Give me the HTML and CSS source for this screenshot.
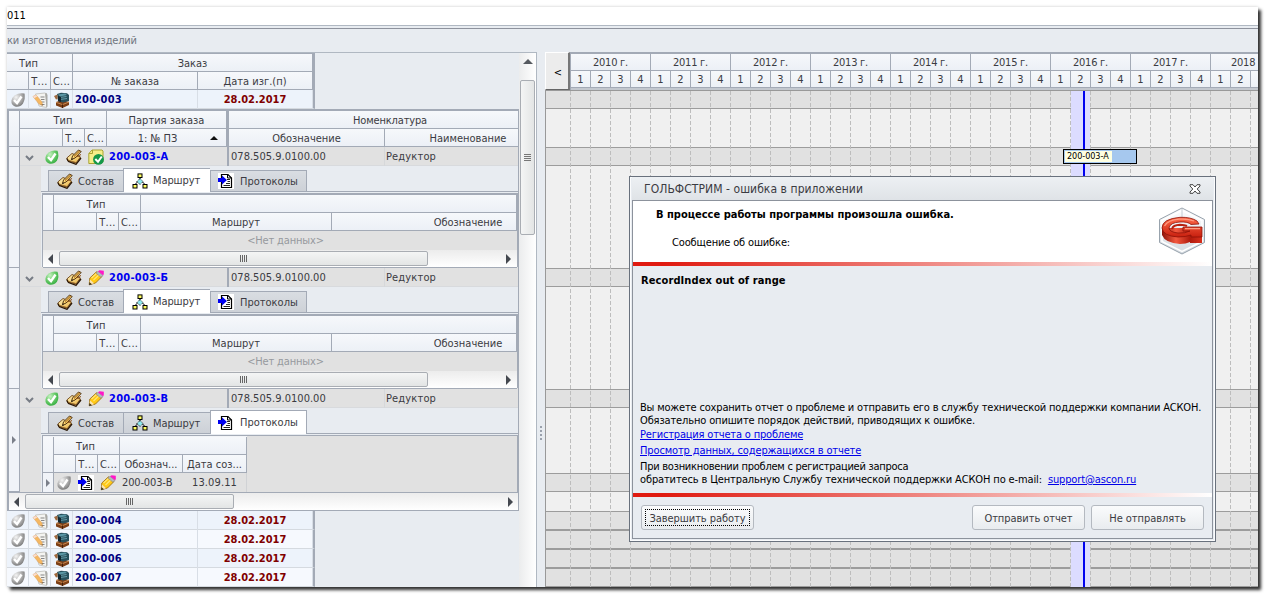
FILE: index.html
```
<!DOCTYPE html>
<html lang="ru">
<head>
<meta charset="utf-8">
<title>ГОЛЬФСТРИМ</title>
<link rel="stylesheet" href="styles.css">
</head>
<body>
<svg class="defs" width="0" height="0">
  <defs>
    <radialGradient id="gGrey" cx=".35" cy=".3" r=".8"><stop offset="0" stop-color="#f4f4f4"/><stop offset=".5" stop-color="#b4b4b4"/><stop offset="1" stop-color="#6c6c6c"/></radialGradient>
    <radialGradient id="gGreen" cx=".35" cy=".3" r=".8"><stop offset="0" stop-color="#c4f0c0"/><stop offset=".5" stop-color="#6ccc6c"/><stop offset="1" stop-color="#2ba83a"/></radialGradient>
    <linearGradient id="gGold" x1="0" y1="0" x2="1" y2="1"><stop offset="0" stop-color="#fff6c0"/><stop offset="1" stop-color="#eab040"/></linearGradient>
    <linearGradient id="gRed" x1="0" y1="0" x2="0" y2="1"><stop offset="0" stop-color="#ff6a4a"/><stop offset="1" stop-color="#c8200f"/></linearGradient>
    <linearGradient id="gSide" x1="0" y1="0" x2="1" y2="0"><stop offset="0" stop-color="#8e1208"/><stop offset=".35" stop-color="#f2583e"/><stop offset=".7" stop-color="#b01a0c"/><stop offset="1" stop-color="#d8301c"/></linearGradient>
    <linearGradient id="gHex" x1="0" y1="0" x2="0" y2="1"><stop offset="0" stop-color="#fdfdfe"/><stop offset="1" stop-color="#d3d9df"/></linearGradient>
  </defs>
  <symbol id="ok-grey" viewBox="0 0 16 16"><path d="M4.500 3.500Q9 .5 14.500 1.500Q15.500 7 13 11.500Q10 15.500 5 14.500Q1 13 1.500 8.500Q2 5.500 4.500 3.500Z" fill="url(#gGrey)"/><path d="M4 8L7 11.200L11.500 4.500" fill="none" stroke="#fff" stroke-width="2.400"/></symbol>
  <symbol id="ok-green" viewBox="0 0 16 16"><path d="M4.500 3.500Q9 .5 13.500 1.800Q15.500 7 13 11.500Q10 15.500 5 14.500Q1 13 1.500 8.500Q2 5.500 4.500 3.500Z" fill="url(#gGreen)"/><path d="M4 8L7 11.200L11.500 4.500" fill="none" stroke="#fff" stroke-width="2.400"/></symbol>
  <symbol id="sheet" viewBox="0 0 16 16"><path d="M3.500 2L13 1L14.500 2V15.500L7 14Z" fill="#f4f4f1" stroke="#c4c4c0" stroke-width=".9"/><path d="M8.500 5H12.500M9 7.500H12.500M9.500 10H12.500M8 12.500H12.500" stroke="#858585"/><path d="M13 1.500L14.500 1L15.500 3V14.500L14.500 15.500Z" fill="#aaaaa6"/><path d="M1 4.500L4 3L10 10L10.500 13.500L7 12Z" fill="#f5b862" stroke="#dca468" stroke-width=".6"/><path d="M1 4.500L4 3L5.200 4.400L2.300 6.200Z" fill="#f9dcd0"/><path d="M10.500 13.500L9.300 13L10.400 12Z" fill="#333"/></symbol>
  <symbol id="machine" viewBox="0 0 16 16"><path d="M2 10L8 8L15 10V13L8.500 16L2 13.500Z" fill="#7c3f16"/><path d="M2 10.300L8.500 12.600L15 10" fill="none" stroke="#c98a52"/><path d="M8.500 12.500V16" stroke="#42200a"/><path d="M3 2L7 .8L13 1.200L15 3V9L9 10.500L4 9Z" fill="#28505c"/><path d="M4 2.400L11 1.600L13 3L6 4.500Z" fill="#5c98a6"/><path d="M0 4L3.500 2.500V7L2 7.500Z" fill="#a0683c"/><path d="M6 5.500L12.500 4.500M6 7.500L13 6.500" stroke="#6ca4b0" stroke-width=".9"/><path d="M4 4V9L7 10V5Z" fill="#12262e"/></symbol>
  <symbol id="note" viewBox="0 0 16 16"><path d="M.8 9L6 4.500L14.500 8L10 14L2 12Z" fill="url(#gGold)" stroke="#6b4010" stroke-width=".9"/><path d="M.8 9.500L2.500 12.500L10 15.300L15 9" fill="none" stroke="#2c1804" stroke-width="1.300"/><path d="M2 11L9.700 13.400" stroke="#8a5818" stroke-width=".7"/><path d="M5.500 10.500L6.500 7L12.500 1L15.200 2.500L9 9Z" fill="#ffd870" stroke="#3c2006" stroke-width=".9"/><path d="M8 7.500L13.800 1.800M10 8L15 5.500" stroke="#8a4a10" stroke-width="1"/><path d="M5.200 11L6 9.300L7 10.200Z" fill="#111"/></symbol>
  <symbol id="doc-ok" viewBox="0 0 16 16"><path d="M4 1H14L15 2V13L13 14.500H.8V4.500Z" fill="#f6ee88" stroke="#a9a435"/><path d="M1 4.500H4.500V1" fill="none" stroke="#a9a435"/><circle cx="10.500" cy="10.400" r="5.400" fill="#149848"/><path d="M7.300 10L10 12.800L13.800 7.500" fill="none" stroke="#fff" stroke-width="2"/></symbol>
  <symbol id="pencil" viewBox="0 0 16 16"><path d="M1.200 14.800L1.800 8L8.500 1.800L14 6.500L7.500 13Z" fill="#ffc814" stroke="#94640c" stroke-width=".8"/><path d="M3.500 8L9 3M5.500 10L11 4.800" stroke="#ffe676" stroke-width="1.200"/><path d="M1 15L1.500 12.200L4 14.200Z" fill="#333"/><path d="M1.600 12L2 9.500L6 13.200L4 14Z" fill="#f7e2b8"/><path d="M8 3L10 1.300L15 5.300L13 7.300Z" fill="#b4b8be" stroke="#777" stroke-width=".5"/><path d="M10 1.300L11.500 .2L15.800 .8V4.300L15 5.300Z" fill="#ff18c8"/></symbol>
  <symbol id="tree" viewBox="0 0 16 16"><path d="M8 5V7M5.500 9L3 11.500M10.500 9L13 11.500" stroke="#000" fill="none"/><path d="M5 8.500L8 5.500L11 8.500L8 11.500Z" fill="#8ee8f0" stroke="#000" stroke-dasharray="1 1"/><rect x="6" y=".9" width="4" height="3.600" fill="#ffff60" stroke="#000"/><rect x="1" y="11.500" width="4" height="3.500" fill="#ffff60" stroke="#000"/><rect x="11" y="11.500" width="4" height="3.500" fill="#ffff60" stroke="#000"/></symbol>
  <symbol id="import" viewBox="0 0 16 16"><rect width="16" height="16" fill="#fff"/><path d="M3.500 1.500H10L13.500 5V14.500H3.500Z" fill="#fff" stroke="#000" stroke-width="1.200"/><path d="M9.500 1.500V5H13.500" fill="none" stroke="#000"/><path d="M9 6.500H12M9.500 8.500H12M8 10.500H12M5.500 12.500H12" stroke="#222"/><path d="M0 5H4V2.500L9 7L4 11.500V9H0Z" fill="#0000f0"/></symbol>
</svg>

<div class="app">
  <div class="edit-row">011</div>
  <div class="caption">ки изготовления изделий</div>
  <div class="work">
    <section class="left">
      <div class="main-grid">
        <div class="head head-main">
          <div class="c span3 t-type">Тип</div><div class="c span2">Заказ</div>
          <div class="c"></div><div class="c cut">Т...</div><div class="c cut">С...</div><div class="c">№ заказа</div><div class="c">Дата изг.(п)</div>
        </div>
        <div class="order"><i><svg><use href="#ok-grey"/></svg></i><i><svg><use href="#sheet"/></svg></i><i><svg><use href="#machine"/></svg></i><b>200-003</b><em>28.02.2017</em></div>

        <div class="detail">
          <div class="head head-detail">
            <div class="c tall"></div><div class="c span3">Тип</div><div class="c thick">Партия заказа</div><div class="c span2 t-nom">Номенклатура</div>
            <div class="c"></div><div class="c cut">Т...</div><div class="c cut">С...</div><div class="c thick sort">1: № ПЗ<span class="up"></span></div><div class="c">Обозначение</div><div class="c t-name">Наименование</div>
          </div>

          <div class="item">
            <div class="mark"></div>
            <div class="item-body">
              <div class="batch"><span class="exp"><svg viewBox="0 0 9 6"><path d="M1 1L4.500 4.500L8 1" /></svg></span><i><svg><use href="#ok-green"/></svg></i><i><svg><use href="#note"/></svg></i><i><svg><use href="#doc-ok"/></svg></i><b>200-003-А</b><span class="num">078.505.9.0100.00</span><span class="nom">Редуктор</span></div>
              <div class="nest">
                <div class="tabs"><div class="tab t1"><svg><use href="#note"/></svg><span>Состав</span></div><div class="tab t2 on"><svg><use href="#tree"/></svg><span>Маршрут</span></div><div class="tab t3"><svg><use href="#import"/></svg><span>Протоколы</span></div></div>
                <div class="sub">
                  <div class="head head-sub">
                    <div class="c tall"></div><div class="c span3">Тип</div><div class="c span2"></div>
                    <div class="c"></div><div class="c cut">Т...</div><div class="c cut">С...</div><div class="c">Маршрут</div><div class="c t-obo">Обозначение</div>
                  </div>
                  <div class="empty">&lt;Нет данных&gt;</div>
                  <div class="hscroll"><span class="al"></span><span class="thumb wide"></span><span class="ar"></span></div>
                </div>
              </div>
            </div>
          </div>

          <div class="item">
            <div class="mark"></div>
            <div class="item-body">
              <div class="batch"><span class="exp"><svg viewBox="0 0 9 6"><path d="M1 1L4.500 4.500L8 1" /></svg></span><i><svg><use href="#ok-green"/></svg></i><i><svg><use href="#note"/></svg></i><i><svg><use href="#pencil"/></svg></i><b>200-003-Б</b><span class="num">078.505.9.0100.00</span><span class="nom">Редуктор</span></div>
              <div class="nest">
                <div class="tabs"><div class="tab t1"><svg><use href="#note"/></svg><span>Состав</span></div><div class="tab t2 on"><svg><use href="#tree"/></svg><span>Маршрут</span></div><div class="tab t3"><svg><use href="#import"/></svg><span>Протоколы</span></div></div>
                <div class="sub">
                  <div class="head head-sub">
                    <div class="c tall"></div><div class="c span3">Тип</div><div class="c span2"></div>
                    <div class="c"></div><div class="c cut">Т...</div><div class="c cut">С...</div><div class="c">Маршрут</div><div class="c t-obo">Обозначение</div>
                  </div>
                  <div class="empty">&lt;Нет данных&gt;</div>
                  <div class="hscroll"><span class="al"></span><span class="thumb wide"></span><span class="ar"></span></div>
                </div>
              </div>
            </div>
          </div>

          <div class="item last">
            <div class="mark"><span class="cur"></span></div>
            <div class="item-body">
              <div class="batch"><span class="exp"><svg viewBox="0 0 9 6"><path d="M1 1L4.500 4.500L8 1" /></svg></span><i><svg><use href="#ok-green"/></svg></i><i><svg><use href="#note"/></svg></i><i><svg><use href="#pencil"/></svg></i><b>200-003-В</b><span class="num">078.505.9.0100.00</span><span class="nom">Редуктор</span></div>
              <div class="nest">
                <div class="tabs"><div class="tab t1"><svg><use href="#note"/></svg><span>Состав</span></div><div class="tab t2"><svg><use href="#tree"/></svg><span>Маршрут</span></div><div class="tab t3 on"><svg><use href="#import"/></svg><span>Протоколы</span></div></div>
                <div class="sub grey">
                  <div class="head head-prot">
                    <div class="c tall"></div><div class="c span3">Тип</div><div class="c span2"></div>
                    <div class="c"></div><div class="c cut">Т...</div><div class="c cut">С...</div><div class="c">Обознач...</div><div class="c">Дата соз...</div>
                  </div>
                  <div class="prot"><span class="mk"><span class="cur"></span></span><i><svg><use href="#ok-grey"/></svg></i><i><svg><use href="#import"/></svg></i><i><svg><use href="#pencil"/></svg></i><span class="pn">200-003-В</span><span class="pd">13.09.11</span></div>
                </div>
              </div>
            </div>
          </div>
          <div class="hscroll outer"><span class="al"></span><span class="thumb short"></span><span class="ar"></span></div>
        </div>

        <div class="order"><i><svg><use href="#ok-grey"/></svg></i><i><svg><use href="#sheet"/></svg></i><i><svg><use href="#machine"/></svg></i><b>200-004</b><em>28.02.2017</em></div>
        <div class="order alt"><i><svg><use href="#ok-grey"/></svg></i><i><svg><use href="#sheet"/></svg></i><i><svg><use href="#machine"/></svg></i><b>200-005</b><em>28.02.2017</em></div>
        <div class="order"><i><svg><use href="#ok-grey"/></svg></i><i><svg><use href="#sheet"/></svg></i><i><svg><use href="#machine"/></svg></i><b>200-006</b><em>28.02.2017</em></div>
        <div class="order alt"><i><svg><use href="#ok-grey"/></svg></i><i><svg><use href="#sheet"/></svg></i><i><svg><use href="#machine"/></svg></i><b>200-007</b><em>28.02.2017</em></div>
      </div>
      <div class="vscroll"><span class="au"></span><span class="vthumb"></span></div>
    </section>

    <div class="splitter"><span></span><span></span><span></span><span></span></div>

    <section class="gantt">
      <div class="g-head">
        <div class="back">&lt;</div>
        <div class="scale">
          <div class="years"><span>2010 г.</span><span>2011 г.</span><span>2012 г.</span><span>2013 г.</span><span>2014 г.</span><span>2015 г.</span><span>2016 г.</span><span>2017 г.</span><span class="part">2018</span></div>
          <div class="quarters"><span>1</span><span>2</span><span>3</span><span>4</span><span>1</span><span>2</span><span>3</span><span>4</span><span>1</span><span>2</span><span>3</span><span>4</span><span>1</span><span>2</span><span>3</span><span>4</span><span>1</span><span>2</span><span>3</span><span>4</span><span>1</span><span>2</span><span>3</span><span>4</span><span>1</span><span>2</span><span>3</span><span>4</span><span>1</span><span>2</span><span>3</span><span>4</span><span>1</span><span>2</span><span></span></div>
        </div>
      </div>
      <div class="g-body">
        <div class="g g1"></div><div class="w w1"></div><div class="g g1"></div><div class="w w2"></div><div class="g g1"></div><div class="w w2"></div><div class="g g1"></div><div class="w w3"></div><div class="g g1"></div><div class="w w4"></div><div class="g g2"></div><div class="g g3"></div><div class="g g3"></div><div class="g g4"></div>
        <div class="period"></div>
        <div class="lines"></div>
        <div class="today"></div>
        <div class="bar"><span>200-003-А</span></div>
      </div>
    </section>
  </div>
</div>

<div class="dialog">
  <div class="d-title"><span>ГОЛЬФСТРИМ - ошибка в приложении</span><svg class="x" viewBox="0 0 12 10"><path d="M1 .7H4L6 3L8 .7H11V2L8.200 5L11 8V9.300H8L6 7L4 9.300H1V8L3.800 5L1 2Z"/></svg></div>
  <div class="d-in">
    <div class="d-head">
      <div class="d-msg"><b>В процессе работы программы произошла ошибка.</b><span>Сообщение об ошибке:</span></div>
      <svg class="logo" viewBox="0 0 48 48">
        <path d="M24 1L46.500 12.500V35.500L24 47L1.500 35.500V12.500Z" fill="url(#gHex)" stroke="#98a3ad"/>
        <path d="M24 3.500L44 13.500V34.500L24 44.500L4 34.500V13.500Z" fill="none" stroke="#fff" stroke-width="1.500"/>
        <path d="M24 2V12" stroke="#c4ccd3"/>
        <path d="M4 21V28Q7 36 22 37Q28 37 32 35V36H44V21Z" fill="url(#gSide)"/>
        <path d="M39 14Q33 10 22 10.300Q4 12 4 21Q5 29 20 30Q28 30 33 28V30H44V20H25V24H32Q27 26.500 20 26Q11 25 11 21Q12 15.500 22 15Q30 14.500 33 17.500L41 17Z" fill="url(#gRed)" stroke="#8e1208" stroke-width=".8"/>
        <path d="M6.500 19Q10 13 21 12.200Q30 11.500 36 14M27 21.700H42" fill="none" stroke="#ff9a80" stroke-width="1.200"/>
        <path d="M14 22Q15 18 22 17.800Q27 18 29 19" fill="none" stroke="#b8200f" stroke-width="2"/>
      </svg>
    </div>
    <div class="redline"></div>
    <div class="d-body">
      <b class="err">RecordIndex out of range</b>
      <div class="d-text">
        <p class="p1">Вы можете сохранить отчет о проблеме и отправить его в службу технической поддержки компании АСКОН.</p>
        <p class="p2">Обязательно опишите порядок действий, приводящих к ошибке.</p>
        <p class="l1"><a>Регистрация отчета о проблеме</a></p>
        <p class="l2"><a>Просмотр данных, содержащихся в отчете</a></p>
        <p class="p3">При возникновении проблем с регистрацией запроса</p>
        <p class="p4"><span>обратитесь в Центральную Службу технической поддержки АСКОН по e-mail:</span><a>support@ascon.ru</a></p>
      </div>
    </div>
    <div class="redline"></div>
    <div class="d-foot">
      <div class="btn focus"><span>Завершить работу</span></div>
      <div class="btn push">Отправить отчет</div>
      <div class="btn">Не отправлять</div>
    </div>
  </div>
</div>
</body>
</html>
```
FILE: styles.css
```
* { box-sizing: border-box; }
body {
  margin: 0;
  padding: 7px;
  width: 1265px;
  height: 594px;
  overflow: hidden;
  background: #fff;
  color: #3b3b42;
  font: 11px/14px "DejaVu Sans Condensed", "DejaVu Sans", sans-serif;
  white-space: nowrap;
}
.defs { position: absolute; }
p { margin: 0; }
i, em { font-style: normal; }
svg { display: block; flex: none; }

.app {
  width: 1251px;
  height: 580px;
  background: #e8ecf1;
  box-shadow: 3px 3px 3px #333, 0 0 3px #ccc;
}
.edit-row {
  height: 19px;
  padding-top: 2px;
  background: #fff;
  border-bottom: 1px solid #b0b8c2;
  color: #000;
}
.caption {
  height: 24px;
  margin-top: 2px;
  padding-top: 5px;
  border-top: 1px solid #8e929d;
  color: #707580;
  letter-spacing: -.2px;
}
.work { display: flex; height: 535px; }

/* Left tree grid */
.left {
  display: flex;
  width: 530px;
  height: 535px;
  border-top: 1px solid #b0b8c2;
  border-right: 1px solid #b0b8c2;
}
.main-grid { width: 512px; height: 534px; overflow: hidden; }
.head { display: grid; grid-auto-rows: 18px; }
.c {
  padding-top: 2px;
  line-height: 15px;
  text-align: center;
  border-right: 1px solid #a3aab6;
  border-bottom: 1px solid #a3aab6;
  background: linear-gradient(#f6f8fb, #ecf0f6);
  overflow: hidden;
}
.span3 { grid-column: span 3; }
.span2 { grid-column: span 2; }
.tall { grid-row: span 2; }
.cut { letter-spacing: .2px; }
.head-main {
  width: 308px;
  grid-template-columns: 22px 22px 22px 125px 115px;
  border-top: 1px solid #a3aab6;
  border-right: 2px solid #a3aab6;
}
.t-type { padding-right: 22px; }
.order {
  display: grid;
  grid-template-columns: 22px 22px 22px 125px 115px;
  width: 308px;
  height: 19px;
  background: #edf3fb;
  border-right: 2px solid #a3aab6;
  border-bottom: 1px solid #d5dae0;
}
.order.alt { background: #f6f9fe; }
.order > * { border-right: 1px solid #d8dee6; line-height: 19px; }
.order i, .batch i, .prot i { display: flex; align-items: center; justify-content: center; }
.order i svg, .batch i svg, .prot i svg { width: 16px; height: 16px; }
.order b { padding-left: 2px; color: #000080; letter-spacing: .2px; }
.order em { text-align: center; font-weight: bold; color: #800000; }

.detail {
  width: 512px;
  height: 402px;
  border: 1px solid #a3aab6;
  border-top-width: 2px;
  border-left-width: 2px;
}
.head-detail { grid-template-columns: 11px 43px 22px 22px 122px 156px 133px; }
.head-detail > :last-child, .head-detail > .t-nom { border-right: 0; }
.head-detail > .t-nom { padding-left: 33px; letter-spacing: -.15px; }
.thick { border-right: 3px solid #a3aab6; }
.sort { position: relative; padding-right: 18px; letter-spacing: -.1px; }
.up {
  position: absolute;
  right: 8px;
  top: 7px;
  border: 4px solid transparent;
  border-top: 0;
  border-bottom: 4px solid #111;
}
.item { display: flex; height: 121px; }
.item.last { height: 104px; border-bottom: 1px solid #a3aab6; }
.mark {
  display: flex;
  align-items: center;
  justify-content: center;
  width: 11px;
  background: #f0f3f8;
  border-right: 1px solid #a3aab6;
  border-bottom: 1px solid #a3aab6;
}
.cur { border: 4px solid transparent; border-left: 4px solid #7b808a; border-right: 0; }
.item-body { width: 498px; background: #e1e1e1; }
.batch {
  display: grid;
  grid-template-columns: 21px 22px 22px 22px 122px 156px 133px;
  height: 19px;
  line-height: 19px;
  border-bottom: 1px solid #d8dadd;
}
.exp { display: flex; align-items: center; justify-content: center; padding: 2px 2px 0 0; }
.exp svg { width: 9px; height: 6px; fill: none; stroke: #777c85; stroke-width: 2; }
.batch b { padding-left: 2px; color: #0000f0; border-right: 2px solid #a3aab6; letter-spacing: .25px; }
.num { padding-left: 2px; letter-spacing: .02px; border-right: 1px solid #d6d8da; }
.nom { padding-left: 1px; letter-spacing: .15px; }
.nest { width: 477px; margin-left: 21px; background: #e8ecf1; }
.tabs {
  display: flex;
  align-items: flex-end;
  height: 26px;
  padding-left: 7px;
  border-bottom: 1px solid #a3aab6;
}
.tab {
  display: flex;
  align-items: center;
  height: 21px;
  padding-left: 8px;
  border: 1px solid #a3aab6;
  border-bottom: 0;
  border-right: 0;
  background: linear-gradient(#d9dde2, #cdd1d7);
}
.tab svg { width: 16px; height: 16px; margin-right: 5px; }
.tab span { padding-top: 2px; }
.tab.on span { padding-top: 1px; }
.t1 { width: 75px; }
.t2 { width: 87px; }
.t2.on { padding-left: 8px; }
.t3 { width: 97px; padding-left: 7px; border-right: 1px solid #a3aab6; }
.t3 svg { margin-right: 6px; }
.tab.on { height: 24px; margin-bottom: -1px; background: #fff; }
.tab.t2 span { letter-spacing: -.1px; }
.sub {
  margin-top: 1px;
  border-top: 2px solid #a3aab6;
  border-left: 1px solid #a3aab6;
  margin-left: 1px;
  border-right: 1px solid #a3aab6;
}
.head-sub { grid-template-columns: 11px 43px 22px 22px 191px 185px; }
.head-sub .span3 { padding-right: 2px; }
.t-obo { padding-left: 88px; }
.t-name { padding-left: 33px; }
.empty { height: 19px; padding-left: 11px; line-height: 20px; text-align: center; color: #96999e; background: #e1e1e1; letter-spacing: -.15px; }
.hscroll {
  display: flex;
  align-items: center;
  height: 17px;
  padding: 0 6px 0 5px;
  background: linear-gradient(#ececec, #fff);
}
.item .hscroll { box-shadow: 0 1px #a3aab6; }
.al { border: 5px solid transparent; border-left: 0; border-right: 5px solid #44484f; }
.ar { margin-left: auto; border: 5px solid transparent; border-right: 0; border-left: 5px solid #44484f; }
.thumb {
  height: 15px;
  margin-left: 6px;
  border: 1px solid #a9adb3;
  border-radius: 2px;
  background:
    repeating-linear-gradient(90deg, #666 0 1px, transparent 1px 2px) center / 7px 7px no-repeat,
    linear-gradient(#f4f5f5, #e3e5e5);
}
.wide { width: 369px; }
.short { width: 209px; }
.sub.grey { border-top-width: 1px; background: #e1e1e1; height: 57px; }
.head-prot { width: 204px; grid-template-columns: 11px 22px 22px 22px 63px 64px; border-top: 1px solid #f2f4f7; grid-template-rows: 18px 18px; }
.head-prot .span3 { padding-right: 2px; }
.prot {
  display: grid;
  grid-template-columns: 11px 22px 22px 22px 63px 64px;
  height: 19px;
  line-height: 19px;
}
.prot .mk { display: flex; align-items: center; justify-content: center; background: #f0f3f8; border-right: 1px solid #a3aab6; }
.prot i { padding-right: 2px; }
.pn { padding-left: 2px; letter-spacing: -.15px; }
.pd { text-align: center; border-right: 1px solid #d0d2d5; letter-spacing: .1px; }
.outer { padding-right: 5px; padding-left: 5px; }

.vscroll {
  display: flex;
  flex-direction: column;
  align-items: center;
  width: 17px;
  padding-top: 6px;
  background: linear-gradient(90deg, #ebeced, #fff);
}
.au { border: 5px solid transparent; border-top: 0; border-bottom: 5px solid #55595f; }
.vthumb {
  width: 15px;
  height: 155px;
  margin-top: 16px;
  border: 1px solid #a9adb3;
  border-radius: 2px;
  background:
    repeating-linear-gradient(#777 0 1px, transparent 1px 2px) center / 7px 7px no-repeat,
    linear-gradient(90deg, #f4f5f5, #e3e5e5);
}

.splitter {
  display: flex;
  flex-direction: column;
  justify-content: flex-start;
  align-items: center;
  gap: 2px;
  width: 8px;
  padding-top: 374px;
}
.splitter span { width: 2px; height: 2px; background: #9aa1ac; }

/* Timeline */
.gantt { width: 713px; }
.g-head { display: flex; height: 39px; overflow: hidden; border-bottom: 1px solid #999; }
.back {
  width: 25px;
  height: 38px;
  padding-left: 2px;
  line-height: 39px;
  text-align: center;
  color: #000;
  background: #ececec;
  border: 1px solid #fff;
  border-right: 2px solid #777;
  border-bottom: 1px solid #666;
  flex: none;
}
.scale { flex: none; width: 701px; border-left: 1px solid #a3aab6; border-top: 2px solid #a3aab6; background: #e8ecf1; }
.scale > div { display: flex; }
.scale span {
  flex: none;
  text-align: center;
  border-right: 1px solid #a3aab6;
  border-bottom: 1px solid #a3aab6;
  background: linear-gradient(#f6f8fb, #ecf0f6);
}
.years span { width: 80px; height: 17px; line-height: 17px; letter-spacing: -.25px; }
.years .part { padding-left: 20px; text-align: left; }
.quarters span { width: 20px; height: 17px; line-height: 17px; }
.quarters { border-bottom: 2px solid #c3c8cf; }
.g-body { position: relative; height: 496px; overflow: hidden; border-left: 1px solid #999; }
.g { background: #e1e1e1; border-bottom: 1px solid #9c9c9c; }
.w { background: #f0f0f0; border-bottom: 1px solid #9c9c9c; }
.g1 { height: 18px; }
.w1 { height: 39px; }
.w2 { height: 103px; }
.w3 { height: 66px; }
.w4 { height: 20px; }
.g2, .g3, .g4 { height: 19px; border-bottom-width: 2px; }
.lines {
  position: absolute;
  inset: 0 0 0 20px;
  background: repeating-linear-gradient(#bdbdbd 0 4px, transparent 4px 6px);
  mask: repeating-linear-gradient(90deg, transparent 0 4px, #000 4px 5px, transparent 5px 20px);
}
.period { position: absolute; left: 525px; top: 0; bottom: 0; width: 19px; background: #dcdcff; }
.today { position: absolute; left: 537px; top: 0; bottom: 0; width: 2px; background: #0000f0; }
.bar {
  position: absolute;
  left: 517px;
  top: 58px;
  width: 74px;
  height: 15px;
  padding: 1px;
  border: 1px solid #000;
  background: #a6c8ee;
}
.bar span { display: block; width: 47px; height: 11px; padding-left: 2px; line-height: 11px; font-size: 9px; letter-spacing: -.05px; background: #ffffe1; color: #000; }

/* Error window */
.dialog {
  position: absolute;
  left: 629px;
  top: 176px;
  width: 587px;
  height: 366px;
  padding: 0 2px 2px;
  border: 1px solid #69717d;
  background: #e8ecf1;
  box-shadow: inset 0 0 0 1px #fbfcfd;
}
.d-title {
  display: flex;
  justify-content: space-between;
  align-items: center;
  height: 23px;
  padding: 1px 12px 0 12px;
  font-size: 12px;
  letter-spacing: .06px;
  background: linear-gradient(#edf0f3, #dfe3e7);
}
.x { width: 12px; height: 10px; fill: #fff; stroke: #444; stroke-width: 1; }
.d-in { height: 339px; border: 1px solid #8c929c; }
.d-head { display: flex; justify-content: space-between; height: 61px; padding: 6px 6px 0 23px; background: #fff; color: #000; }
.d-msg b, .d-msg span { display: block; }
.d-msg b { padding-top: 1px; }
.d-msg span { padding: 14px 0 0 16px; letter-spacing: -.15px; }
.logo { width: 48px; height: 48px; }
.redline { height: 4px; background: linear-gradient(90deg, #e01a10 0, #e01a10 5%, #fff); }
.d-body { height: 227px; padding: 8px 8px 0 7px; color: #000; }
.err { display: block; height: 127px; padding-left: 1px; letter-spacing: .1px; }
.d-text { line-height: 13px; }
.d-text a { color: #0000e8; text-decoration: underline; }
.p1 { letter-spacing: -.18px; }
.p2 { letter-spacing: -.14px; }
.l1 { padding-top: 1px; letter-spacing: -.18px; }
.l2 { padding-top: 3px; letter-spacing: -.13px; }
.p3 { padding-top: 3px; letter-spacing: -.26px; }
.p4 { letter-spacing: -.13px; }
.p4 span { margin-right: 6px; }
.d-foot { display: flex; padding: 8px; gap: 6px; }
.btn {
  width: 113px;
  height: 25px;
  line-height: 25px;
  text-align: center;
  border: 1px solid #b4b9c0;
  border-radius: 3px;
  letter-spacing: -.05px;
  background: linear-gradient(#fafbfc, #e9ecef);
}
.push { margin-left: auto; }
.focus { padding: 3px; line-height: 15px; border: 1px solid #b4b9c0; }
.focus span { display: block; height: 17px; border: 1px dotted #000; line-height: 17px; }
```
